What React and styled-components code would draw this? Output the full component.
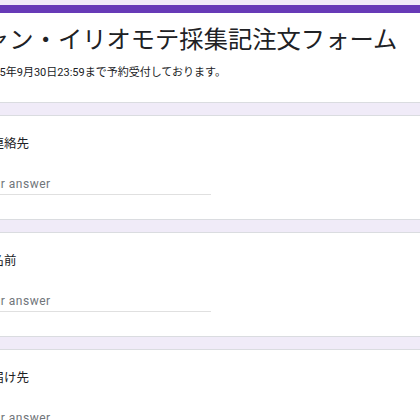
import React from "react";
import styled, { createGlobalStyle } from "styled-components";

const GlobalStyle = createGlobalStyle`
  html, body {
    margin: 0;
    padding: 0;
    background: #f0ebf8;
    overflow: hidden;
  }
`;

const StyledPage = styled.div`
  width: 420px;
  height: 420px;
  overflow: hidden;
  background: #f0ebf8;
  padding-top: 5px;
  box-sizing: border-box;
`;

const StyledForm = styled.div`
  display: flex;
  flex-direction: column;
  gap: 12px;
  width: 640px;
  margin-left: -50px;
`;

const StyledCard = styled.div`
  background: #fff;
  border: 1px solid #dadce0;
  border-radius: 8px;
  padding: ${(p) => (p.$header ? "9px 24px 21px 34px" : "17px 24px 24px 28px")};
  border-top: ${(p) => (p.$header ? "8px solid #673ab7" : "1px solid #dadce0")};
  display: flex;
  flex-direction: column;
  font-family: "Noto Sans CJK JP", "Noto Sans", sans-serif;
  color: #202124;
`;

const StyledTitle = styled.h1`
  margin: 0;
  font-size: 24.3px;
  line-height: 32px;
  font-weight: 400;
  white-space: nowrap;
`;

const StyledNote = styled.p`
  margin: 11px 0 0 -4px;
  font-size: 11px;
  line-height: 16px;
  font-family: Roboto, "Noto Sans CJK JP", sans-serif;
`;

const StyledLabel = styled.div`
  font-size: 12.5px;
  line-height: 20px;
`;

const StyledInput = styled.div`
  margin-top: 23px;
  width: 232px;
  padding-bottom: 2px;
  border-bottom: 1px solid #e0e0e0;
  font-family: Roboto, sans-serif;
  font-size: 12px;
  line-height: 16px;
  letter-spacing: 0.5px;
  color: #70757a;
`;

const questions = ["ご連絡先", "お名前", "お届け先"];

const App = () => {
  return (
    <>
      <GlobalStyle />
      <StyledPage>
        <StyledForm>
          <StyledCard $header>
            <StyledTitle>ャン・イリオモテ採集記注文フォーム</StyledTitle>
            <StyledNote>2025年9月30日23:59まで予約受付しております。</StyledNote>
          </StyledCard>
          {questions.map((q) => (
            <StyledCard key={q}>
              <StyledLabel>{q}</StyledLabel>
              <StyledInput>Your answer</StyledInput>
            </StyledCard>
          ))}
        </StyledForm>
      </StyledPage>
    </>
  );
};

export default App;
